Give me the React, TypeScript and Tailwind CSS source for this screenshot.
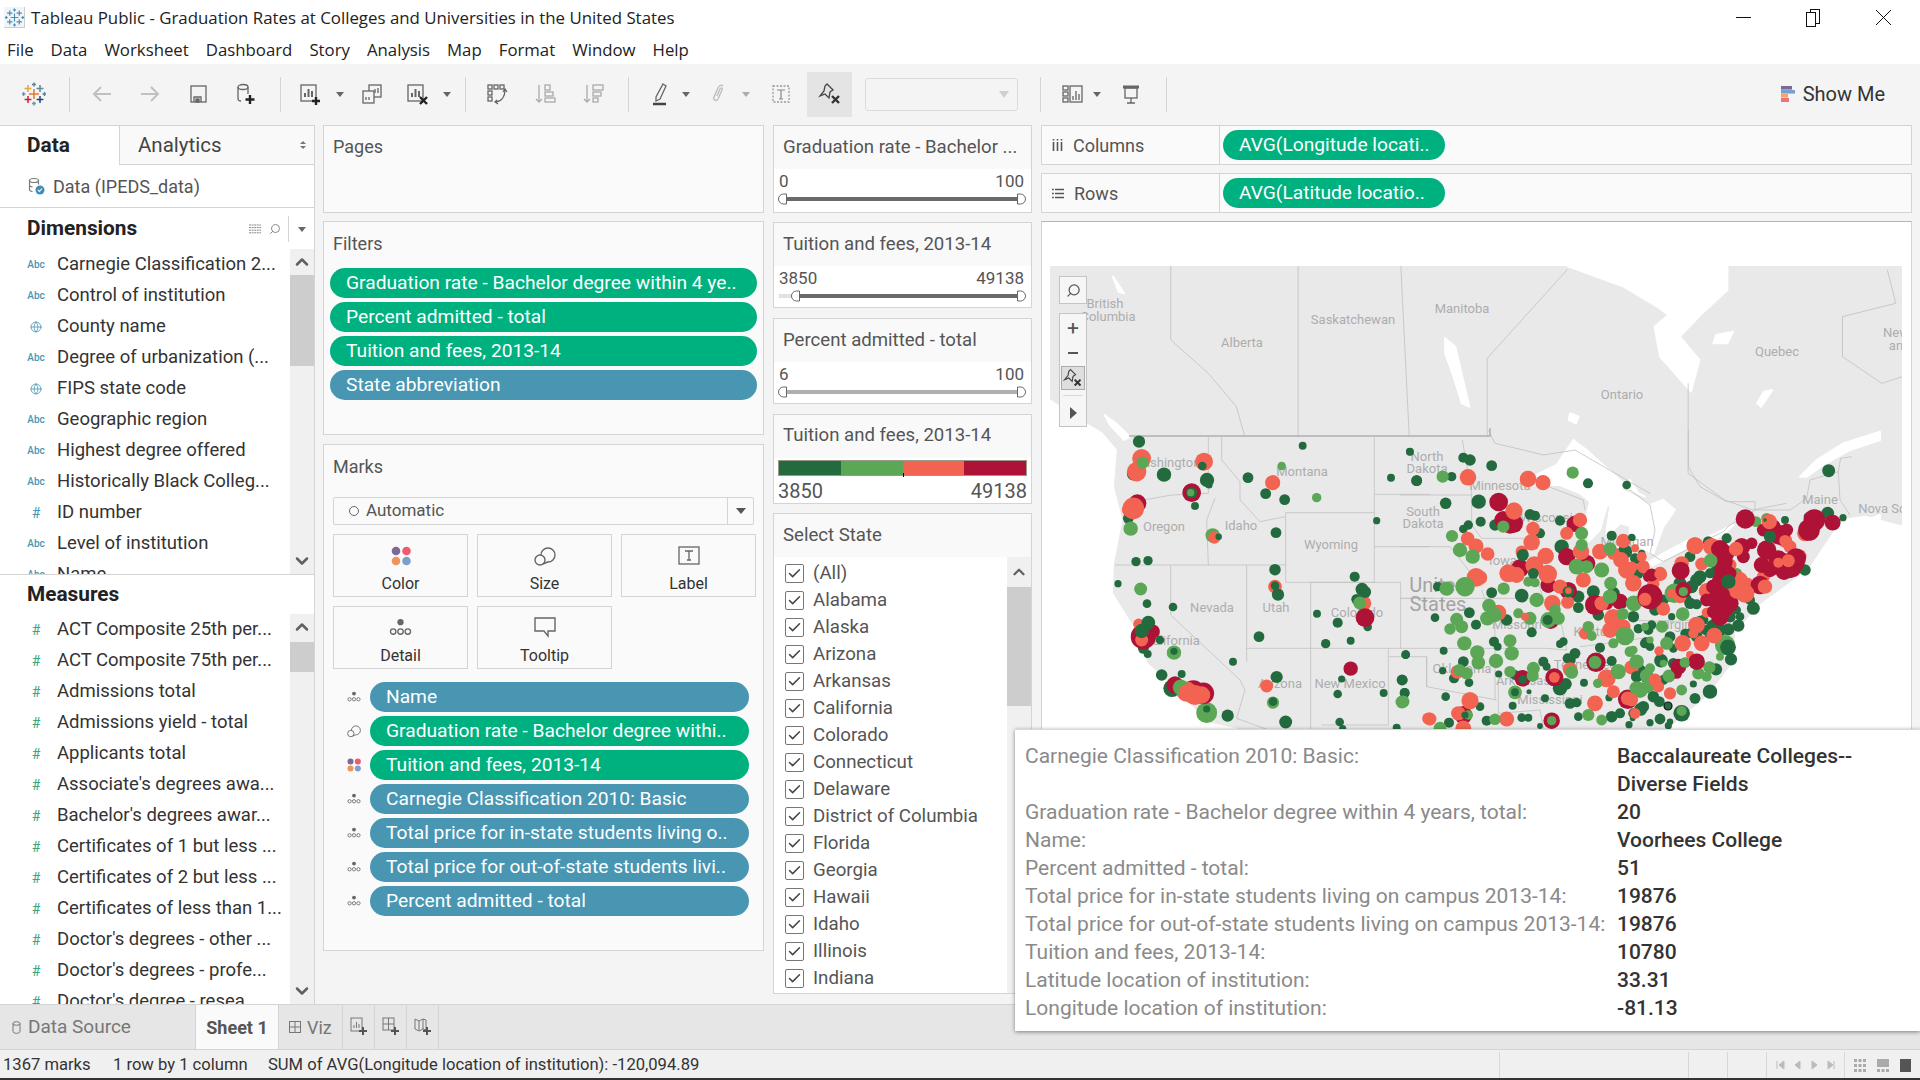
import { Check, ChevronDown, ChevronUp, Globe, Search } from 'lucide-react';
import type { ReactNode } from 'react';

const states = ['(All)', 'Alabama', 'Alaska', 'Arizona', 'Arkansas', 'California', 'Colorado', 'Connecticut', 'Delaware', 'District of Columbia', 'Florida', 'Georgia', 'Hawaii', 'Idaho', 'Illinois', 'Indiana', 'Iowa'];

const dimensions = [
  ['abc', 'Carnegie Classification 2...'],
  ['abc', 'Control of institution'],
  ['geo', 'County name'],
  ['abc', 'Degree of urbanization (...'],
  ['geo', 'FIPS state code'],
  ['abc', 'Geographic region'],
  ['abc', 'Highest degree offered'],
  ['abc', 'Historically Black Colleg...'],
  ['num', 'ID number'],
  ['abc', 'Level of institution'],
  ['abc', 'Name'],
];

const measures = [
  'ACT Composite 25th per...',
  'ACT Composite 75th per...',
  'Admissions total',
  'Admissions yield - total',
  'Applicants total',
  "Associate's degrees awa...",
  "Bachelor's degrees awar...",
  'Certificates of 1 but less ...',
  'Certificates of 2 but less ...',
  'Certificates of less than 1...',
  "Doctor's degrees - other ...",
  "Doctor's degrees - profe...",
  "Doctor's degree - resea",
];

const tooltipRows = [
  ['Carnegie Classification 2010: Basic:', 'Baccalaureate Colleges--'],
  ['', 'Diverse Fields'],
  ['Graduation rate - Bachelor degree within 4 years, total:', '20'],
  ['Name:', 'Voorhees College'],
  ['Percent admitted - total:', '51'],
  ['Total price for in-state students living on campus 2013-14:', '19876'],
  ['Total price for out-of-state students living on campus 2013-14:', '19876'],
  ['Tuition and fees, 2013-14:', '10780'],
  ['Latitude location of institution:', '33.31'],
  ['Longitude location of institution:', '-81.13'],
];

const colors: Record<string, string> = { d: '#236b3f', g: '#5ba755', o: '#f26451', r: '#ae1236' };

// dots are listed as x,y,r in 3x crop coordinates of each map region
const regions: { ox: number; oy: number; layers: [string, string][] }[] = [
  {
    ox: 1100,
    oy: 430,
    layers: [
      ['d', '117,35,17 608,47,11 930,65,11 192,134,20 321,150,20 327,165,10 444,143,15 873,143,11 950,152,15 497,191,15 554,209,15 285,228,11 830,272,10 528,308,15 108,395,13 144,392,13 54,461,10 525,419,16 764,440,14 141,521,12 219,531,12 651,551,11 713,578,14 803,591,12 752,632,11 677,641,13 477,620,15 180,630,12 143,672,11 185,735,16 245,732,11 399,695,11 530,741,17 725,747,10 906,750,15 917,674,12 914,789,14 851,789,11 713,792,12 383,857,17 557,876,18 719,876,12 890,893,11 728,896,10 100,132,18 85,265,15 216,775,24 130,655,15'],
      ['g', '545,108,12 92,296,20 650,203,13 122,477,18 338,316,20 519,818,17 906,816,18 222,668,20 320,848,29'],
      ['r', '112,220,25 275,188,26 752,716,20 130,620,35 158,605,20 225,765,24 310,790,30 280,785,32'],
      ['o', '125,85,26 110,125,27 312,95,25 518,158,21 100,235,30 85,240,18 343,323,17 525,470,19 790,520,22 500,768,18 116,582,15 985,866,17 125,630,18 260,785,28 285,795,28 305,795,24'],
      ['d', '307,108,12 275,188,15 356,320,9 534,494,17 525,467,12 786,478,18 795,486,17 770,508,15 145,578,19 125,603,20 222,664,10 320,837,10 519,815,12'],
      ['g', '128,98,17 272,188,10 779,519,18 242,772,22'],
      ['o', '262,788,24 290,795,22'],
      ['r', '795,563,26'],
    ],
  },
  {
    ox: 1400,
    oy: 430,
    layers: [
      ['d', '29,65,10 50,152,15 190,83,14 210,90,16 275,107,15 155,140,13 564,160,14 680,165,12 137,220,16 236,215,20 242,275,14 205,285,13 190,297,12 285,285,16 390,253,15 405,257,14 480,272,14 113,470,13 105,563,12 275,488,15 208,548,15 228,584,14 320,570,16 365,497,19 395,607,14 282,635,14 293,650,11 131,662,11 17,674,12 190,695,15 128,722,10 162,745,14 207,758,12 137,800,12 240,830,12 8,750,14 14,788,13 296,732,10 338,827,11 387,785,7 430,695,14 440,710,11 435,805,11 510,820,15 530,818,13 600,653,14 635,693,14 552,758,11 627,803,10 535,860,12 365,863,12 385,863,11 260,872,14 147,878,14 420,888,8 687,884,10 635,860,16 490,635,12 480,642,11 512,690,14 525,670,15 503,685,14 480,775,20 497,762,17 345,735,14 420,310,14 485,350,20 535,500,17 580,485,18 595,555,16 535,533,15 675,365,20 715,430,15 635,317,14 697,323,9 710,390,12 735,640,14 715,596,13 640,490,18 700,560,16 745,600,14 720,720,16 740,740,18 700,850,14 730,830,16 660,850,14'],
      ['r', '296,216,26 340,280,27 310,270,25 360,415,25 445,465,22 523,282,22 500,380,24 585,525,28 660,515,22 560,400,24 505,482,24 588,697,27 368,745,23 452,572,23 463,742,25 455,872,23 683,808,27 190,855,25 735,500,18 745,440,15 330,285,24 740,490,20 620,520,18'],
      ['o', '204,142,23 384,147,23 429,158,21 342,243,24 203,326,19 228,348,21 263,372,19 399,296,19 395,337,23 365,365,17 437,378,23 403,406,25 325,430,25 350,435,22 228,442,26 240,443,20 443,432,26 480,470,20 457,520,23 503,517,18 540,270,20 500,310,18 543,365,23 550,450,21 600,365,22 670,333,20 663,390,22 700,460,23 680,420,24 640,565,26 630,600,22 670,590,20 605,520,20 555,610,17 510,718,20 620,745,25 640,785,18 695,712,20 585,820,22 210,812,24 90,867,18 320,867,21 190,895,22 175,850,20 172,726,19 295,548,22 705,355,11 463,742,15 683,805,19 730,410,18 640,370,18'],
      ['g', '128,140,17 518,128,17 156,318,17 180,360,20 218,380,20 140,476,20 195,470,27 310,290,17 311,476,17 385,455,14 405,458,13 410,510,20 267,527,19 262,565,20 285,555,20 170,568,18 150,597,16 185,590,18 193,640,20 330,632,18 335,670,20 232,667,20 235,698,19 288,693,20 178,720,17 200,730,17 330,725,16 400,715,18 398,737,17 345,787,19 515,727,18 585,697,18 593,760,13 655,725,21 690,665,15 710,695,17 565,590,16 575,618,14 630,500,20 668,552,17 605,420,21 630,356,18 545,310,18 545,345,17 530,410,22 560,410,18 465,540,16 445,570,22 475,565,18 390,565,18 355,550,14 640,640,14 675,618,26 700,520,20 632,460,18 10,815,17 120,895,18 285,868,16 205,855,13 455,872,13 565,855,17 605,870,15 720,780,22 745,770,18'],
      ['d', '368,375,17 400,430,15 368,748,12 345,787,11 443,570,14 195,855,10 505,485,16 137,218,12'],
      ['o', '375,560,11 505,482,9'],
    ],
  },
  {
    ox: 1630,
    oy: 430,
    layers: [
      ['d', '596,122,18 593,250,18 639,263,10 532,260,10 465,270,11 290,325,14 200,357,13 180,380,15 235,335,15 525,420,16 435,420,13 200,450,18 185,470,18 320,540,12 370,535,18 200,523,14 75,540,16 125,560,10 65,585,13 25,597,12 48,637,14 325,587,17 295,598,17 250,590,20 165,610,13 303,688,17 60,650,12 258,718,17 190,762,10 240,785,20 195,805,15 88,815,15 40,735,14 155,850,23 32,838,18 90,867,15 60,878,10 120,875,9 115,887,10 8,865,8 5,322,10 35,370,10 15,385,14 130,655,12 170,505,13 93,692,19 210,440,18 150,460,18 120,500,14 180,520,16 100,510,15 220,570,14 200,620,16 270,600,18 240,610,16 120,620,15 300,560,16 180,610,14 210,570,12 130,700,15 100,750,14 70,800,16 20,740,16 260,420,16 240,430,14 225,600,14 330,560,12 480,430,14 360,510,14'],
      ['g', '378,275,15 410,265,15 320,430,15 133,490,27 158,552,19 96,590,17 45,590,11 285,645,28 110,640,18 270,680,11 60,630,10 165,698,15 117,738,18 205,730,17 230,740,14 238,712,17 50,737,19 10,660,12 20,695,20 55,770,16 20,775,20 155,780,15 155,843,14 12,520,22 60,715,14 100,700,10'],
      ['o', '195,347,24 215,402,18 155,400,20 245,350,24 465,332,20 480,350,18 525,310,22 430,385,18 475,390,20 510,378,18 315,490,16 352,465,20 230,483,22 90,432,20 70,462,17 100,537,19 45,508,20 10,460,18 35,380,14 5,412,16 230,548,14 200,585,23 158,640,23 215,640,22 253,617,22 190,610,14 87,663,13 180,675,11 75,750,18 85,770,16 120,790,17 5,810,18 15,850,15 150,500,18 125,490,13 15,353,8 330,450,22 300,480,20 370,470,18 400,440,18 300,405,18'],
      ['r', '346,267,27 553,270,30 537,300,30 608,278,22 450,315,28 410,360,27 395,405,22 445,390,27 498,385,28 462,425,23 490,420,20 270,357,25 280,395,26 335,350,24 340,380,18 152,422,25 65,435,18 270,450,22 270,500,30 280,530,30 270,560,25 250,510,20 390,465,26 60,500,35 200,695,23 145,710,22 160,480,22 140,730,15 280,420,25 300,430,18 230,510,18 300,520,24 250,470,20 400,300,18 430,290,20 470,300,18 500,400,22 420,420,20 365,340,16 250,545,18 290,370,22'],
      ['o', '418,275,21 318,357,20 405,470,20 345,490,26 475,392,18 445,398,14 465,332,16 88,432,14 45,508,18 198,585,22 158,640,20 320,485,20'],
      ['d', '420,320,17 295,455,20 294,652,22 405,270,5'],
      ['g', '242,392,19 160,485,13 117,738,16 164,698,14'],
    ],
  },
];

const lineColor = '#c0c0c0';

// border polylines, each with the origin and scale of the crop it was read from
const borderSets: { ox: number; oy: number; sx: number; lines: string[] }[] = [
  {
    ox: 1040,
    oy: 260,
    sx: 1.782,
    lines: [
      '233,18 233,240 300,340 350,440 365,530',
      '460,18 460,530',
      '643,18 658,530',
      '797,530 797,295 940,28',
      '1155,370 1155,640 1220,720 1270,750 1330,730',
      '1510,30 1525,130 1430,170 1430,290 1500,370 1537,350',
    ],
  },
  {
    ox: 1100,
    oy: 430,
    sx: 3,
    lines: [
      '130,210 215,195 325,190',
      '325,20 325,190',
      '365,20 365,90 420,155 420,210 480,275 555,260',
      '345,205 320,270 325,405',
      '45,405 557,405',
      '212,405 212,555 420,750 435,780 410,865 500,898',
      '440,405 440,695',
      '440,655 900,655',
      '557,248 823,248 823,457 557,457 557,248',
      '632,457 902,457 902,655',
      '632,457 632,900',
      '865,655 865,885 665,885',
      '823,20 823,248',
      '823,193 990,193',
      '823,350 990,350',
      '902,505 1000,505',
      '865,680 980,680 980,770',
    ],
  },
  {
    ox: 1400,
    oy: 430,
    sx: 3,
    lines: [
      '187,30 215,190 215,285 245,325 290,325 370,325',
      '0,195 215,195',
      '0,350 150,350 245,470',
      '0,505 285,505 430,505',
      '245,480 285,590 285,810',
      '0,655 440,655 500,660',
      '80,680 80,770 290,810',
      '295,750 295,850 420,840 430,895',
      '265,0 285,40 370,60 430,75 525,60 680,150 750,190',
      '420,160 550,210 555,240',
      '370,325 430,505 480,560 500,660',
      '540,650 620,640 760,620',
    ],
  },
  {
    ox: 1630,
    oy: 430,
    sx: 3,
    lines: [
      '0,180 60,225 75,300 60,370 100,395 280,305 300,285 375,240 480,240 530,205 540,150 625,125 630,210 660,255',
      '625,125 632,85 665,80',
      '175,0 175,110 210,170 290,215 375,215 375,240',
      '0,570 120,575 340,560',
    ],
  },
];

const water: { ox: number; oy: number; sx: number; pts: string }[] = [
  { ox: 1040, oy: 260, sx: 1.782, pts: '17,420 60,470 110,520 135,570 130,680 145,780 130,910 128,1000 165,1100 190,1210 240,1290 300,1390 350,1408 17,1408' },
  { ox: 1040, oy: 260, sx: 1.782, pts: '1120,1408 1190,1310 1240,1200 1240,1120 1280,1040 1370,930 1430,780 1470,770 1537,800 1537,1408' },
  { ox: 1040, oy: 260, sx: 1.782, pts: '940,18 1040,80 1100,140 1120,165 1095,200 1105,290 1160,395 1175,300 1140,230 1180,160 1225,90 1225,18' },
  { ox: 1040, oy: 260, sx: 1.782, pts: '722,235 740,260 765,440 752,430 735,340 722,280' },
  { ox: 1040, oy: 260, sx: 1.782, pts: '115,465 135,490 160,530 150,540 125,495' },
  { ox: 1040, oy: 260, sx: 1.782, pts: '130,50 150,100 140,95' },
  { ox: 1040, oy: 260, sx: 1.782, pts: '945,460 960,470 955,490 942,480' },
  { ox: 1040, oy: 260, sx: 1.782, pts: '1290,395 1305,390 1285,440 1278,430' },
  { ox: 1040, oy: 260, sx: 1.782, pts: '1205,225 1235,215 1225,250 1200,250' },
  { ox: 1400, oy: 430, sx: 3, pts: '410,135 470,105 520,30 560,60 620,115 700,185 735,200 715,190 690,150 660,180 640,210 620,230 600,300 565,335 555,280 570,215 540,190 480,165 430,165' },
  { ox: 1400, oy: 430, sx: 3, pts: '640,170 690,190 750,250 750,370 735,320 700,290 660,280 620,320 620,300' },
  { ox: 1630, oy: 430, sx: 3, pts: '0,190 60,225 100,210 135,240 100,290 70,370 30,350 0,340' },
  { ox: 1630, oy: 430, sx: 3, pts: '45,418 110,385 195,340 185,325 100,370 50,400' },
  { ox: 1630, oy: 430, sx: 3, pts: '225,325 310,285 290,305 240,335' },
  { ox: 1630, oy: 430, sx: 3, pts: '510,140 560,90 640,40 750,5 750,30 660,60 580,105 530,140' },
  { ox: 1630, oy: 430, sx: 3, pts: '690,300 710,270 750,255 750,300 720,325' },
];

const mapLabels: [string, number, number][] = [
  ['British', 1105, 308], ['Columbia', 1108, 321], ['Saskatchewan', 1353, 324], ['Alberta', 1242, 347], ['Manitoba', 1462, 313],
  ['Ontario', 1622, 399], ['Quebec', 1777, 356], ['New', 1896, 337], ['an', 1896, 350], ['Nova Sc', 1882, 513], ['Maine', 1820, 504],
  ['Washington', 1166, 467], ['Montana', 1302, 476], ['Oregon', 1164, 531], ['Idaho', 1241, 530], ['Wyoming', 1331, 549],
  ['Nevada', 1212, 612], ['Utah', 1276, 612], ['Colorado', 1357, 617], ['California', 1172, 645], ['Arizona', 1280, 688],
  ['New Mexico', 1350, 688], ['North', 1427, 461], ['Dakota', 1427, 473], ['South', 1423, 516], ['Dakota', 1423, 528],
  ['Minnesota', 1500, 490], ['Wisconsin', 1550, 522], ['Missouri', 1517, 629], ['Arkansas', 1523, 685], ['Mississippi', 1550, 704],
  ['Tennessee', 1585, 669], ['Oklahoma', 1462, 673], ['Kentucky', 1600, 636], ['Michigan', 1627, 546], ['Virginia', 1680, 629], ['Iowa', 1503, 565],
];

function poly(ox: number, oy: number, sx: number, pts: string) {
  return pts
    .split(' ')
    .map((p) => {
      const [x, y] = p.split(',').map(Number);
      return `${ox + x / sx},${oy + y / 3}`;
    })
    .join(' ');
}

function MapView() {
  return (
    <svg viewBox="1050 266 852 463" className="block w-[852px] h-[463px]">
      <rect x="1050" y="266" width="852" height="463" fill="#e9e9e9" />
      {water.map((w, i) => (
        <polygon key={i} points={poly(w.ox, w.oy, w.sx, w.pts)} fill="#ffffff" stroke="#ffffff" strokeWidth="2" strokeLinejoin="round" />
      ))}
      {borderSets.map((set, i) =>
        set.lines.map((l, j) => (
          <polyline key={`${i}-${j}`} points={poly(set.ox, set.oy, set.sx, l)} fill="none" stroke={lineColor} strokeWidth="0.8" />
        ))
      )}
      <polyline points="1129,436 1490,436 1490,428" fill="none" stroke="#b0b0b0" strokeWidth="1.5" />
      {mapLabels.map(([t, x, y], i) => (
        <text key={i} x={x} y={y} textAnchor="middle" fontSize="13" fill="#adadad" fontFamily="Roboto, sans-serif">
          {t}
        </text>
      ))}
      <text x="1438" y="592" textAnchor="middle" fontSize="20" fill="#a3a3a3" fontFamily="Roboto, sans-serif">United</text>
      <text x="1438" y="611" textAnchor="middle" fontSize="20" fill="#a3a3a3" fontFamily="Roboto, sans-serif">States</text>
      {regions.map((reg, i) =>
        reg.layers.map(([c, data], j) =>
          data.split(' ').map((d, k) => {
            const [x, y, r] = d.split(',').map(Number);
            return <circle key={`${i}-${j}-${k}`} cx={reg.ox + x / 3} cy={reg.oy + y / 3} r={(r * 1.08) / 3} fill={colors[c]} />;
          })
        )
      )}
      <circle cx="1668" cy="706" r="4" fill="#236b3f" stroke="#111" strokeWidth="1.2" />
    </svg>
  );
}

function DetailIcon({ size = 18 }: { size?: number }) {
  return (
    <svg viewBox="0 0 22 18" width={size} height={(size * 18) / 22} fill="none" stroke="#666" strokeWidth="1.3">
      <circle cx="11" cy="4" r="3" fill="#666" stroke="none" />
      <circle cx="4" cy="13" r="2.6" />
      <circle cx="11" cy="13" r="2.6" />
      <circle cx="18" cy="13" r="2.6" />
    </svg>
  );
}

function SizeIcon({ size = 22 }: { size?: number }) {
  return (
    <svg viewBox="0 0 22 22" width={size} height={size} fill="none" stroke="#666" strokeWidth="1.4">
      <path d="M7 10 A7 7 0 1 1 14 17 C12.5 17.5 11 18 9 19" />
      <circle cx="6" cy="15" r="5" />
    </svg>
  );
}

function ColorIcon({ size = 20 }: { size?: number }) {
  return (
    <svg viewBox="0 0 20 20" width={size} height={size}>
      <circle cx="5" cy="5" r="4.3" fill="#7b6a98" />
      <circle cx="15.5" cy="5" r="4.3" fill="#f05a6e" />
      <circle cx="5" cy="15" r="4.3" fill="#f0935a" />
      <circle cx="15.5" cy="15" r="4.3" fill="#7b9fcf" />
    </svg>
  );
}

function Caret({ className = '' }: { className?: string }) {
  return <span className={`w-0 h-0 border-x-[4px] border-x-transparent border-t-[5px] border-t-[#666] ${className}`} />;
}

function Sep({ className = '' }: { className?: string }) {
  return <span className={`w-px h-[35px] bg-[#d4d4d4] ${className}`} />;
}

function TableauLogo({ size = 24, mono = false }: { size?: number; mono?: boolean }) {
  const crosses: [number, number, number, string][] = [
    [12, 12, 5, '#e8762b'],
    [6, 6.5, 3.4, '#e8a33c'],
    [18, 6.5, 3.4, '#5b879b'],
    [6, 17.5, 3.4, '#c72035'],
    [18, 17.5, 3.4, '#1f457e'],
    [12, 2.5, 2, '#5b879b'],
    [12, 21.5, 2, '#7099a6'],
    [1.5, 12, 2, '#7099a6'],
    [22.5, 12, 2, '#59879b'],
  ];
  return (
    <svg viewBox="0 0 24 24" width={size} height={size}>
      {crosses.map(([x, y, s, c], i) => (
        <path key={i} d={`M${x - s} ${y}H${x + s}M${x} ${y - s}V${y + s}`} stroke={mono ? '#4a8db7' : c} strokeWidth="1.5" fill="none" />
      ))}
    </svg>
  );
}

function Ico({ children, w = 24 }: { children: ReactNode; w?: number }) {
  return (
    <svg viewBox="0 0 24 24" width={w} height={24} fill="none" stroke="#666" strokeWidth="1.3" className="shrink-0">
      {children}
    </svg>
  );
}

function PinClear() {
  return (
    <>
      <path d="M9 2 L15 8 L12 10 L11 16 L7 12 L2 14 L6 9 L7 4 Z" stroke="#444" />
      <path d="M14 14 L21 21 M21 14 L14 21" stroke="#333" strokeWidth="2.4" />
    </>
  );
}

function Toolbar() {
  return (
    <div className="h-[61px] bg-[#f4f4f4] flex items-center shrink-0 pb-[1px]">
      <span className="ml-[22px] w-[24px] flex"><TableauLogo /></span>
      <Sep className="ml-[23px]" />
      <span className="ml-[20px] flex"><Ico><path d="M21 12H4M11 5l-7 7 7 7" stroke="#c0c0c0" strokeWidth="2" /></Ico></span>
      <span className="ml-[24px] flex"><Ico><path d="M3 12h17M13 5l7 7-7 7" stroke="#c0c0c0" strokeWidth="2" /></Ico></span>
      <span className="ml-[24px] flex"><Ico><rect x="5" y="4" width="15" height="16" /><path d="M8 20v-5h7v5" /><rect x="10" y="17" width="3" height="3" fill="#666" /></Ico></span>
      <span className="ml-[23px] flex"><Ico><ellipse cx="10" cy="5" rx="5" ry="2.5" /><path d="M5 5v12c0 1 1.5 2 3 2M15 5v7" /><path d="M17 13v9M12.5 17.5h9" stroke="#222" strokeWidth="2.4" /></Ico></span>
      <Sep className="ml-[23px]" />
      <span className="ml-[17px] flex"><Ico><rect x="3" y="3" width="15" height="16" /><path d="M7 15v-4M10.5 15V7M14 15v-6" strokeWidth="2" /><path d="M18 15v8M14 19h8" stroke="#222" strokeWidth="2.4" /></Ico></span>
      <Caret className="ml-[14px]" />
      <span className="ml-[16px] flex"><Ico><rect x="9" y="3" width="12" height="12" /><rect x="3" y="9" width="11" height="12" fill="#f4f4f4" /><path d="M6 18v-3M9 18v-3M15 11V7M18 11V6" /></Ico></span>
      <span className="ml-[21px] flex"><Ico><rect x="3" y="3" width="15" height="16" /><path d="M7 15v-4M10.5 15V7M14 15v-6" strokeWidth="2" /><path d="M15 15l7 7M22 15l-7 7" stroke="#222" strokeWidth="2.4" /></Ico></span>
      <Caret className="ml-[14px]" />
      <Sep className="ml-[14px]" />
      <span className="ml-[19px] flex"><Ico><rect x="3" y="3" width="4" height="4" /><rect x="9" y="3" width="4" height="4" /><rect x="15" y="3" width="4" height="4" /><rect x="3" y="9" width="4" height="4" /><rect x="3" y="15" width="4" height="4" /><path d="M20 8c0 6-3 11-9 12M18 10l2-3 2 3M12 18l-2 2 3 2" /></Ico></span>
      <span className="ml-[24px] flex"><Ico><path d="M6 3v17M3 17l3 3 3-3" stroke="#aaa" /><rect x="12" y="3" width="5" height="5" stroke="#aaa" /><rect x="12" y="10" width="8" height="4" stroke="#aaa" /><rect x="12" y="16" width="10" height="4" stroke="#aaa" /></Ico></span>
      <span className="ml-[24px] flex"><Ico><path d="M6 3v17M3 17l3 3 3-3" stroke="#aaa" /><rect x="12" y="3" width="10" height="5" stroke="#aaa" /><rect x="12" y="10" width="8" height="4" stroke="#aaa" /><rect x="12" y="16" width="5" height="4" stroke="#aaa" /></Ico></span>
      <Sep className="ml-[23px]" />
      <span className="ml-[19px] flex"><Ico><path d="M15 2l3 2-6 13-4 2 0-4z" /><path d="M5 22h13" stroke="#444" strokeWidth="2.5" /></Ico></span>
      <Caret className="ml-[10px]" />
      <span className="ml-[17px] flex"><Ico><path d="M16 4c-2-2-4 0-5 2l-4 9c-1 3 2 5 4 2l4-9c1-2-1-3-2-1l-3 7" stroke="#bbb" /></Ico></span>
      <Caret className="ml-[11px] opacity-50" />
      <span className="ml-[19px] flex"><Ico><rect x="4" y="4" width="16" height="16" strokeDasharray="2 1.5" stroke="#999" /><path d="M8 8h8M12 8v9M10 17h4" stroke="#888" strokeWidth="1.2" /></Ico></span>
      <span className="ml-[14px] w-[45px] h-[45px] bg-[#e4e4e4] flex items-center justify-center"><Ico><PinClear /></Ico></span>
      <span className="ml-[13px] w-[153px] h-[33px] border border-[#dcdcdc] rounded-[3px] flex items-center justify-end pr-[8px]">
        <span className="w-0 h-0 border-x-[5px] border-x-transparent border-t-[7px] border-t-[#cfcfcf]" />
      </span>
      <Sep className="ml-[22px]" />
      <span className="ml-[19px] flex"><Ico><rect x="3" y="4" width="5" height="4" /><rect x="3" y="10" width="5" height="4" /><rect x="3" y="16" width="5" height="4" /><rect x="10" y="4" width="12" height="16" /><path d="M13 18v-4M16 18V9M19 18v-6" /></Ico></span>
      <Caret className="ml-[9px]" />
      <span className="ml-[18px] flex"><Ico><path d="M4 5h16" strokeWidth="3" /><rect x="6" y="6" width="12" height="10" /><path d="M12 16v5M8 21h8" /></Ico></span>
      <Sep className="ml-[23px]" />
      <div className="ml-auto mr-[35px] flex items-center gap-[8px] text-[20px] text-[#333] font-[Roboto,sans-serif]">
        <svg width="14" height="16" viewBox="0 0 14 16" className="shrink-0">
          <rect x="0" y="0" width="11" height="3.6" fill="#7b6a98" />
          <rect x="0" y="4" width="14" height="3.6" fill="#7b9fcf" />
          <rect x="0" y="8" width="7" height="3.6" fill="#f0a868" />
          <rect x="0" y="12" width="8" height="4" fill="#f0707e" />
        </svg>
        Show Me
      </div>
    </div>
  );
}

function FieldIcon({ kind }: { kind: string }) {
  if (kind === 'geo') return <Globe size={12} color="#4996b2" strokeWidth={1.6} />;
  if (kind === 'num') return <span className="text-[14px] leading-none text-[#4996b2]">#</span>;
  if (kind === 'green') return <span className="text-[14px] leading-none text-[#3da37f]">#</span>;
  return <span className="text-[10px] leading-none font-medium text-[#4996b2]">Abc</span>;
}

function FieldRow({ kind, label }: { kind: string; label: string }) {
  return (
    <div className="h-[31px] shrink-0 flex items-center pt-[1px]">
      <span className="w-[57px] pl-[22px] pr-[7px] flex justify-center"><FieldIcon kind={kind} /></span>
      <span className="text-[18.5px] text-[#333] whitespace-nowrap">{label}</span>
    </div>
  );
}

function Scrollbar({ thumb }: { thumb: string }) {
  return (
    <div className="w-[24px] shrink-0 bg-[#f0f0f0] flex flex-col">
      <div className="h-[26px] shrink-0 flex items-center justify-center">
        <ChevronUp size={20} strokeWidth={3} color="#606060" />
      </div>
      <div className={thumb} />
      <div className="flex-1" />
      <div className="h-[26px] shrink-0 flex items-center justify-center">
        <ChevronDown size={20} strokeWidth={3} color="#606060" />
      </div>
    </div>
  );
}

function LeftPane() {
  return (
    <aside className="w-[315px] shrink-0 bg-white border-r border-[#d4d4d4] flex flex-col">
      <div className="h-[40px] flex shrink-0 border-t border-[#d4d4d4]">
        <div className="w-[119px] flex items-center pl-[27px] text-[20.8px] font-bold text-[#222]">Data</div>
        <div className="flex-1 bg-[#f9f9f9] border-l border-b border-[#d4d4d4] flex items-center pl-[18px] text-[20.5px] text-[#444]">
          Analytics
          <span className="ml-auto mr-[8px] flex flex-col gap-[2px]">
            <span className="w-0 h-0 border-x-[3px] border-x-transparent border-b-[3px] border-b-[#777]" />
            <span className="w-0 h-0 border-x-[3px] border-x-transparent border-t-[3px] border-t-[#777]" />
          </span>
        </div>
      </div>
      <div className="h-[43px] shrink-0 border-b border-[#d4d4d4] flex items-center pl-[28px] gap-[8px] text-[18px] text-[#555]">
        <svg width="17" height="18" viewBox="0 0 17 18" fill="none" stroke="#777" strokeWidth="1.1">
          <ellipse cx="6" cy="3.5" rx="4.5" ry="2" />
          <path d="M1.5 3.5v9c0 1 1.5 1.8 3 2M10.5 3.5v4M1.5 8c0 1 1.5 1.8 3 2" />
          <circle cx="12" cy="13" r="4.5" fill="#3d8fb5" stroke="none" />
          <path d="M10 13l1.5 1.5L14 11.5" stroke="#fff" />
        </svg>
        Data (IPEDS_data)
      </div>
      <div className="h-[41px] shrink-0 flex items-center pl-[27px] pt-[1px] text-[20.8px] font-bold text-[#222]">
        Dimensions
        <span className="ml-auto flex items-center">
          <svg width="12" height="10" viewBox="0 0 12 10" stroke="#888" strokeWidth="1" strokeDasharray="2 0.6"><path d="M0 1h12M0 3.6h12M0 6.2h12M0 8.8h12" /></svg>
          <Search size={12} color="#888" className="ml-[8px] -scale-x-100" />
          <span className="ml-[7px] w-px h-[26px] bg-[#d4d4d4]" />
          <Caret className="ml-[9px] mr-[8px]" />
        </span>
      </div>
      <div className="h-[326px] shrink-0 flex border-b border-[#d4d4d4]">
        <div className="flex-1 overflow-hidden">
          {dimensions.map(([k, l]) => (
            <FieldRow key={l} kind={k} label={l} />
          ))}
        </div>
        <Scrollbar thumb="h-[91px] shrink-0 bg-[#cdcdcd]" />
      </div>
      <div className="h-[39px] shrink-0 flex items-center pl-[27px] text-[20.8px] font-bold text-[#222]">Measures</div>
      <div className="flex-1 min-h-0 flex">
        <div className="flex-1 overflow-hidden">
          {measures.map((l) => (
            <FieldRow key={l} kind="green" label={l} />
          ))}
        </div>
        <Scrollbar thumb="h-[30px] mt-[2px] shrink-0 bg-[#cdcdcd]" />
      </div>
    </aside>
  );
}

function Pill({ label, color, className = '' }: { label: string; color: 'blue' | 'green'; className?: string }) {
  return (
    <div className={`h-[30px] rounded-full flex items-center pl-[16px] pt-[1px] text-[19.2px] text-white whitespace-nowrap overflow-hidden ${color === 'blue' ? 'bg-[#4996b2]' : 'bg-[#00b180]'} ${className}`}>
      {label}
    </div>
  );
}

function MarkCard({ label, children }: { label: string; children: ReactNode }) {
  return (
    <div className="w-[135px] h-[63px] border border-[#d4d4d4] flex flex-col items-center pt-[9px] text-[16px] text-[#333]">
      <div className="h-[24px] flex items-center justify-center">{children}</div>
      <span className="mt-[5px]">{label}</span>
    </div>
  );
}

function CenterColumn() {
  const marks: [string, string, 'blue' | 'green'][] = [
    ['detail', 'Name', 'blue'],
    ['size', 'Graduation rate - Bachelor degree withi..', 'green'],
    ['color', 'Tuition and fees, 2013-14', 'green'],
    ['detail', 'Carnegie Classification 2010: Basic', 'blue'],
    ['detail', 'Total price for in-state students living o..', 'blue'],
    ['detail', 'Total price for out-of-state students livi..', 'blue'],
    ['detail', 'Percent admitted - total', 'blue'],
  ];
  return (
    <div className="w-[441px] ml-[8px] shrink-0 flex flex-col">
      <section className="h-[88px] shrink-0 bg-[#fafafa] border border-[#d4d4d4] px-[9px] pt-[7px] text-[18px] text-[#555]">Pages</section>
      <section className="h-[214px] mt-[8px] shrink-0 bg-[#fafafa] border border-[#d4d4d4] px-[6px] pt-[8px]">
        <div className="pl-[3px] text-[18px] text-[#555] h-[38px]">Filters</div>
        <div className="flex flex-col gap-[4px]">
          <Pill color="green" label="Graduation rate - Bachelor degree within 4 ye.." />
          <Pill color="green" label="Percent admitted - total" />
          <Pill color="green" label="Tuition and fees, 2013-14" />
          <Pill color="blue" label="State abbreviation" />
        </div>
      </section>
      <section className="h-[507px] mt-[9px] shrink-0 bg-[#fafafa] border border-[#d4d4d4] px-[9px] pt-[8px]">
        <div className="text-[18px] text-[#555] h-[44px]">Marks</div>
        <div className="h-[28px] border border-[#d4d4d4] rounded-[2px] flex items-center text-[17px] text-[#555]">
          <span className="ml-[15px] w-[10px] h-[10px] rounded-full border border-[#666]" />
          <span className="ml-[7px]">Automatic</span>
          <span className="ml-auto w-[26px] h-full border-l border-[#d4d4d4] flex items-center justify-center">
            <span className="w-0 h-0 border-x-[5px] border-x-transparent border-t-[6px] border-t-[#555]" />
          </span>
        </div>
        <div className="mt-[9px] grid grid-cols-[135px_135px_135px] gap-x-[9px] gap-y-[9px]">
          <MarkCard label="Color"><ColorIcon /></MarkCard>
          <MarkCard label="Size"><SizeIcon /></MarkCard>
          <MarkCard label="Label">
            <svg width="22" height="20" viewBox="0 0 22 20" fill="none" stroke="#666" strokeWidth="1.3"><rect x="1" y="1" width="20" height="17" /><path d="M7 5h8M11 5v9M9 14h4" /></svg>
          </MarkCard>
          <MarkCard label="Detail"><DetailIcon size={23} /></MarkCard>
          <MarkCard label="Tooltip">
            <svg width="22" height="21" viewBox="0 0 22 21" fill="none" stroke="#666" strokeWidth="1.4"><path d="M1 1h20v13h-7v5l-4-5H1z" /></svg>
          </MarkCard>
        </div>
        <div className="mt-[13px] flex flex-col gap-[4px]">
          {marks.map(([icon, label, color]) => (
            <div key={label} className="flex items-center">
              <span className="w-[37px] pl-[14px] flex justify-start">
                {icon === 'detail' && <DetailIcon size={14} />}
                {icon === 'size' && <SizeIcon size={14} />}
                {icon === 'color' && <ColorIcon size={14} />}
              </span>
              <Pill color={color} label={label} className="w-[379px]" />
            </div>
          ))}
        </div>
      </section>
    </div>
  );
}

function Handle({ side }: { side: 'left' | 'right' }) {
  return (
    <span
      className={`absolute top-1/2 -translate-y-1/2 w-[9px] h-[11px] bg-white border border-[#666] ${
        side === 'left' ? 'left-[-1px] rounded-l-full' : 'right-[-1px] rounded-r-full'
      }`}
    />
  );
}

function SliderCard({ title, min, max, track = 'bg-[#6a6a6a]', pad = '', h, mt }: { title: string; min: string; max: string; track?: string; pad?: string; h: string; mt: string }) {
  return (
    <div className={`${h} ${mt} shrink-0 bg-white border border-[#d4d4d4]`}>
      <div className="h-[43px] bg-[#f9f9f9] flex items-center pl-[9px] text-[18.6px] text-[#555] whitespace-nowrap overflow-hidden">{title}</div>
      <div className="px-[5px] pt-[2px]">
        <div className="flex justify-between text-[17px] leading-[20px] text-[#555] pr-[2px]">
          <span>{min}</span>
          <span>{max}</span>
        </div>
        <div className="relative h-[4px] mt-[6px] mr-[1px] bg-[#e2e2e2]">
          <div className={`relative h-full ${track} ${pad}`}>
            <Handle side="left" />
            <Handle side="right" />
          </div>
        </div>
      </div>
    </div>
  );
}

function FilterColumn() {
  return (
    <div className="w-[259px] ml-[9px] shrink-0 flex flex-col">
      <SliderCard h="h-[88px]" mt="" title="Graduation rate - Bachelor ..." min="0" max="100" />
      <SliderCard h="h-[86px]" mt="mt-[9px]" title="Tuition and fees, 2013-14" min="3850" max="49138" pad="ml-[13px]" />
      <SliderCard h="h-[86px]" mt="mt-[10px]" title="Percent admitted - total" min="6" max="100" track="bg-[#b0b0b0]" />
      <div className="h-[90px] mt-[10px] shrink-0 bg-white border border-[#d4d4d4]">
        <div className="h-[43px] bg-[#f9f9f9] flex items-center pl-[9px] pb-[2px] text-[18.6px] text-[#555]">Tuition and fees, 2013-14</div>
        <div className="relative mx-[4px] mt-[2px] h-[16px] border border-[#9a9a8a] flex">
          <span className="flex-1 bg-[#236b3f]" />
          <span className="flex-1 bg-[#5ba755]" />
          <span className="flex-1 bg-[#f26451]" />
          <span className="flex-1 bg-[#ae1236]" />
          <span className="absolute left-1/2 bottom-[-2px] w-px h-[4px] bg-black" />
        </div>
        <div className="mx-[4px] mt-[3px] flex justify-between text-[20px] leading-[24px] text-[#555]">
          <span>3850</span>
          <span>49138</span>
        </div>
      </div>
      <div className="h-[481px] mt-[9px] shrink-0 bg-white border border-[#d4d4d4] flex flex-col">
        <div className="h-[43px] shrink-0 bg-[#f9f9f9] flex items-center pl-[9px] pt-[1px] text-[18.6px] text-[#555]">Select State</div>
        <div className="flex-1 min-h-0 flex">
          <div className="flex-1 overflow-hidden pl-[11px] pt-[3px]">
            {states.map((s) => (
              <div key={s} className="h-[27px] flex items-center text-[18.7px] text-[#555] whitespace-nowrap">
                <span className="w-[19px] h-[19px] mr-[9px] border border-[#777] rounded-[2px] flex items-center justify-center bg-white shrink-0">
                  <Check size={15} strokeWidth={2.4} color="#444" />
                </span>
                {s}
              </div>
            ))}
          </div>
          <div className="w-[24px] shrink-0 bg-[#f0f0f0] flex flex-col">
            <div className="h-[30px] flex items-center justify-center"><ChevronUp size={18} strokeWidth={3} color="#606060" /></div>
            <div className="h-[119px] bg-[#cdcdcd]" />
          </div>
        </div>
      </div>
    </div>
  );
}

function ShelfRow({ icon, label, pill, className = '' }: { icon: ReactNode; label: string; pill: string; className?: string }) {
  return (
    <div className={`h-[40px] shrink-0 bg-[#fafafa] border border-[#d4d4d4] flex items-center ${className}`}>
      <div className="w-[178px] h-full border-r border-[#d4d4d4] flex items-center pl-[10px] gap-[10px] text-[18px] text-[#555]">
        {icon}
        {label}
      </div>
      <Pill color="green" label={pill} className="ml-[3px] w-[222px]" />
    </div>
  );
}

function RightColumn() {
  return (
    <div className="w-[871px] ml-[9px] shrink-0 flex flex-col relative">
      <ShelfRow
        label="Columns"
        pill="AVG(Longitude locati.."
        icon={<svg width="11" height="12" viewBox="0 0 11 12" stroke="#555" strokeWidth="1.6"><path d="M1.5 0v1.5M1.5 3v9M5.5 0v1.5M5.5 3v9M9.5 0v1.5M9.5 3v9" /></svg>}
      />
      <ShelfRow
        className="mt-[8px]"
        label="Rows"
        pill="AVG(Latitude locatio.."
        icon={<svg width="12" height="11" viewBox="0 0 12 11" stroke="#555" strokeWidth="1.6"><path d="M0 1.5h1.8M3 1.5h9M0 5.5h1.8M3 5.5h9M0 9.5h1.8M3 9.5h9" /></svg>}
      />
      <div className="relative h-[775px] mt-[8px] shrink-0 bg-white border border-[#d4d4d4] border-t-[#b5b5b5] pl-[8px] pt-[44px]">
        <MapView />
        <div className="absolute left-[17px] top-[54px] w-[28px] h-[28px] bg-[#f6f6f6] border border-[#c4c4c4] flex items-center justify-center">
          <Search size={15} color="#555" className="-scale-x-100" />
        </div>
        <div className="absolute left-[17px] top-[91px] w-[28px] h-[114px] bg-[#f6f6f6] border border-[#c4c4c4] flex flex-col items-center">
          <span className="mt-[4px] h-[20px] text-[21px] leading-[20px] text-[#555]">+</span>
          <span className="mt-[14px] w-[10px] h-[2px] bg-[#555]" />
          <span className="mt-[12px] w-[24px] h-[24px] bg-[#dedede] border border-[#aaa] flex items-center justify-center">
            <svg viewBox="0 0 24 24" width="20" height="20" fill="none" strokeWidth="1.4"><PinClear /></svg>
          </span>
          <span className="mt-[5px] w-[20px] h-px bg-[#d8d8d8]" />
          <span className="mt-[11px] w-0 h-0 border-y-[6px] border-y-transparent border-l-[7px] border-l-[#555]" />
        </div>
      </div>
    </div>
  );
}

function Tooltip() {
  return (
    <div className="absolute left-[1015px] top-[729px] w-[905px] h-[302px] bg-white shadow-[0_1px_4px_rgba(0,0,0,0.45)] border-t border-[#d8d8d8] pl-[10px] pt-[13px]">
      <div className="grid grid-cols-[592px_1fr] auto-rows-[28px] items-center text-[21px] whitespace-nowrap">
        {tooltipRows.map(([k, v], i) => [
          <span key={`k${i}`} className="text-[#8a8a8a]">{k}</span>,
          <span key={`v${i}`} className="font-medium text-[#333]">{v}</span>,
        ])}
      </div>
    </div>
  );
}

function BottomBars() {
  const addIcons = [
    <><rect x="2" y="1" width="11" height="13" /><path d="M5 11V8M7.5 11V5M10 11V7" /></>,
    <><rect x="2" y="1" width="11" height="12" /><path d="M2 7h11M7.5 1v12" /></>,
    <><path d="M2 2l4 2 4-2 3 1v10l-3-1-4 2-4-2z" /><path d="M6 4v10M10 2v10" /></>,
  ];
  return (
    <>
      <div className="h-[45px] shrink-0 bg-[#e6e6e6] border-t border-[#d4d4d4] flex text-[18px] text-[#777]">
        <div className="w-[195px] flex items-center pl-[12px] pt-[1px] gap-[7px] text-[19px]">
          <svg width="9" height="13" viewBox="0 0 9 13" fill="none" stroke="#777"><ellipse cx="4.5" cy="2.5" rx="3.5" ry="1.8" /><path d="M1 2.5v8c0 1 1.5 1.8 3.5 1.8S8 11.500 8 10.500v-8" /></svg>
          Data Source
        </div>
        <div className="w-[84px] bg-[#fafafa] border-x border-[#d4d4d4] flex items-center justify-center font-bold text-[#555]">Sheet 1</div>
        <div className="w-[64px] border-r border-[#d4d4d4] flex items-center pl-[10px] gap-[6px]">
          <svg width="12" height="12" viewBox="0 0 12 12" fill="none" stroke="#777"><rect x="0.5" y="0.500" width="11" height="11" /><path d="M0.5 6h11M6 0.500v11" /></svg>
          Viz
        </div>
        {addIcons.map((g, i) => (
          <div key={i} className="w-[32px] border-r border-[#d4d4d4] flex items-center justify-center">
            <svg width="20" height="20" viewBox="0 0 20 20" fill="none" stroke="#777">
              {g}
              <path d="M14 10v8M10 14h8" stroke="#555" strokeWidth="2" />
            </svg>
          </div>
        ))}
      </div>
      <div className="h-[29px] shrink-0 bg-[#f0f0f0] border-t border-[#d4d4d4] flex items-center pt-[2px] text-[16.6px] text-[#333] whitespace-nowrap">
        <span className="ml-[3px] w-[110px]">1367 marks</span>
        <span className="w-[155px]">1 row by 1 column</span>
        <span>SUM of AVG(Longitude location of institution): -120,094.89</span>
        <div className="ml-auto flex items-center h-full">
          <span className="w-px h-full bg-[#d8d8d8]" />
          <span className="w-[188px]" />
          <span className="w-px h-full bg-[#d8d8d8]" />
          <span className="w-[38px]" />
          <span className="w-px h-full bg-[#d8d8d8]" />
          <span className="w-[38px]" />
          <span className="w-px h-full bg-[#d8d8d8]" />
          <span className="w-[77px] flex justify-center gap-[8px]">
            {['M1 1v8M8 1L3 5l5 4z', 'M7 1L2 5l5 4z', 'M2 1l5 4-5 4z', 'M7 1v8M1 1l5 4-5 4z'].map((d) => (
              <svg key={d} width="9" height="10" viewBox="0 0 9 10" fill="#bbb" stroke="#bbb"><path d={d} /></svg>
            ))}
          </span>
          <span className="w-px h-full bg-[#d8d8d8]" />
          <span className="w-[75px] flex items-center justify-center gap-[11px]">
            <svg width="12" height="13" viewBox="0 0 12 13" fill="#aaa"><path d="M0 0h3v3H0zM4.500 0h3v3h-3zM9 0h3v3H9zM0 5h3v3H0zM4.500 5h3v3h-3zM9 5h3v3H9zM0 10h3v3H0zM4.500 10h3v3h-3zM9 10h3v3H9z" /></svg>
            <svg width="12" height="13" viewBox="0 0 12 13" fill="#aaa"><path d="M0 0h12v8H0zM0 10h3v3H0zM4.500 10h3v3h-3zM9 10h3v3H9z" /></svg>
            <span className="w-[11px] h-[13px] bg-[#555]" />
          </span>
        </div>
      </div>
      <div className="h-[2px] shrink-0 bg-[#333]" />
    </>
  );
}

export default function App() {
  return (
    <div className="relative w-[1920px] h-[1080px] overflow-hidden flex flex-col bg-white font-[Roboto,sans-serif]">
      <div className="h-[32px] shrink-0 flex items-center pt-[3px] text-[16.85px] text-[#222] font-['Open_Sans',sans-serif]">
        <span className="ml-[4px] w-[21px] h-[21px] bg-[#f2f5f8] border-b border-r border-[#ccc] flex items-center justify-center"><TableauLogo size={19} mono /></span>
        <span className="ml-[6px]">Tableau Public - Graduation Rates at Colleges and Universities in the United States</span>
        <span className="ml-auto w-[15px] h-px bg-[#111]" />
        <span className="ml-[55px] relative w-[14px] h-[18px]">
          <span className="absolute right-0 top-0 w-[10px] h-[15px] border border-[#111]" />
          <span className="absolute left-0 bottom-0 w-[10px] h-[15px] border border-[#111] bg-white" />
        </span>
        <svg className="ml-[55px] mr-[28px]" width="17" height="17" viewBox="0 0 17 17" stroke="#111"><path d="M1 1l15 15M16 1L1 16" /></svg>
      </div>
      <div className="h-[32px] shrink-0 flex items-center pl-[7px] pt-[4px] gap-[17px] text-[16.8px] text-[#222] font-['Open_Sans',sans-serif]">
        {['File', 'Data', 'Worksheet', 'Dashboard', 'Story', 'Analysis', 'Map', 'Format', 'Window', 'Help'].map((m) => (
          <span key={m}>{m}</span>
        ))}
      </div>
      <Toolbar />
      <main className="flex-1 min-h-0 flex bg-[#f4f4f4]">
        <LeftPane />
        <CenterColumn />
        <FilterColumn />
        <RightColumn />
      </main>
      <BottomBars />
      <Tooltip />
    </div>
  );
}
